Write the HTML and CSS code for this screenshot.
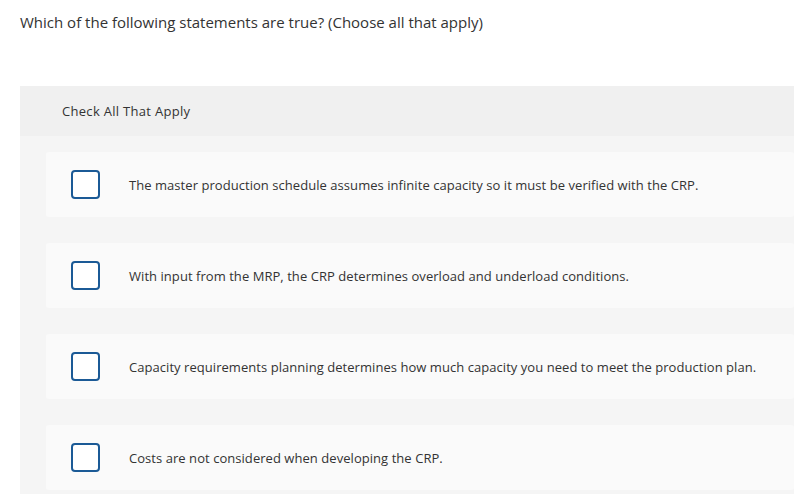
FILE: index.html
```html
<!DOCTYPE html>
<html>
<head>
<meta charset="utf-8">
<link rel="stylesheet" href="styles.css">
</head>
<body>
<div class="page">
  <p class="question">Which of the following statements are true? (Choose all that apply)</p>
  <div class="panel">
    <div class="panel-head">Check All That Apply</div>
    <div class="options">
      <label class="option"><span class="box"></span><span class="text">The master production schedule assumes infinite capacity so it must be verified with the CRP.</span></label>
      <label class="option"><span class="box"></span><span class="text">With input from the MRP, the CRP determines overload and underload conditions.</span></label>
      <label class="option"><span class="box"></span><span class="text">Capacity requirements planning determines how much capacity you need to meet the production plan.</span></label>
      <label class="option"><span class="box"></span><span class="text">Costs are not considered when developing the CRP.</span></label>
    </div>
  </div>
</div>
</body>
</html>
```
FILE: styles.css
```css
html, body {
  margin: 0;
  padding: 0;
  background: #fff;
  overflow: hidden;
}
.page {
  padding-left: 20px;
  font-family: "Open Sans", "Liberation Sans", sans-serif;
  color: #333;
}
.question {
  margin: 0;
  padding-top: 12px;
  height: 86px;
  box-sizing: border-box;
  font-size: 15px;
  line-height: 20px;
}
.panel {
  background: #f5f5f5;
  height: 420px;
}
.panel-head {
  background: #f0f0f0;
  height: 50px;
  display: flex;
  align-items: center;
  padding-left: 42px;
  font-size: 13px;
  letter-spacing: 0.3px;
}
.options {
  padding: 16px 0 0 26px;
  display: flex;
  flex-direction: column;
  gap: 26px;
}
.option {
  background: #fafafa;
  border-radius: 3px;
  height: 65px;
  display: flex;
  align-items: center;
  padding-left: 25px;
}
.box {
  width: 29px;
  height: 29px;
  box-sizing: border-box;
  border: 2px solid #1b5a96;
  border-radius: 4px;
  background: #fff;
  flex: none;
}
.text {
  margin-left: 29px;
  font-size: 13px;
  letter-spacing: 0.05px;
}
```
